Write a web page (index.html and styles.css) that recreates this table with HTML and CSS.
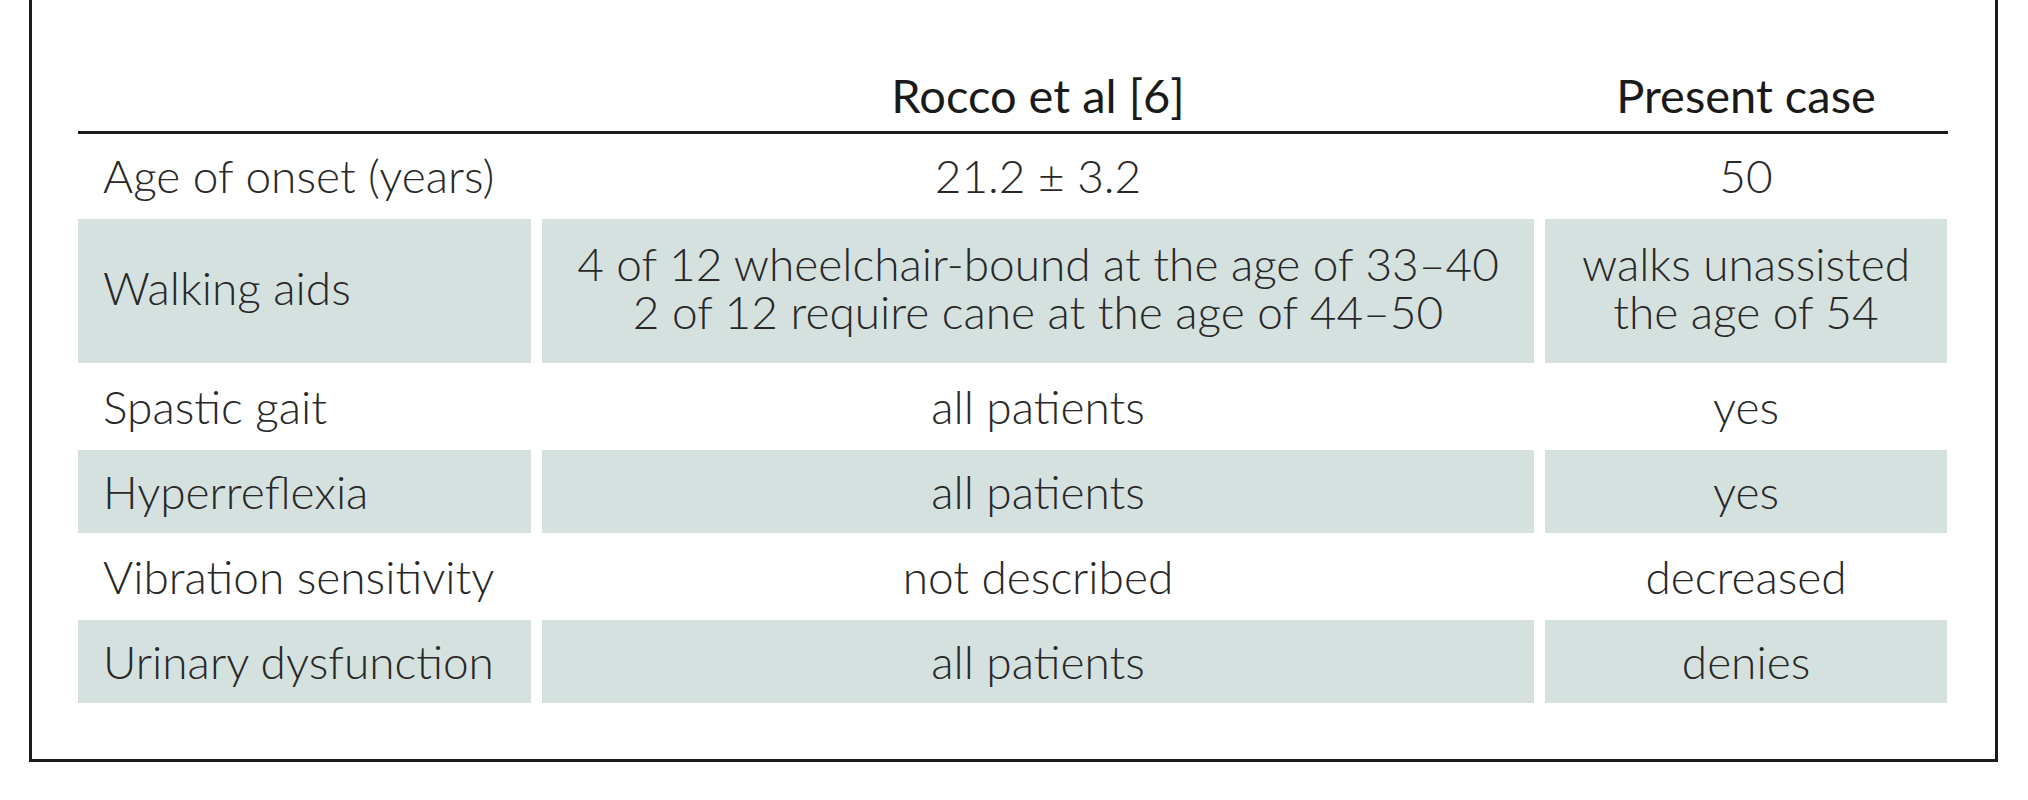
FILE: index.html
```html
<!DOCTYPE html>
<html lang="en">
<head>
<meta charset="utf-8">
<title>Comparison table</title>
<link rel="stylesheet" href="styles.css">
</head>
<body>
<div class="frame">
  <div class="table">
    <div class="row head">
      <div class="cell"></div>
      <div class="cell c">Rocco et al [6]</div>
      <div class="cell c">Present case</div>
    </div>
    <div class="body">
      <div class="row">
        <div class="cell l">Age of onset (years)</div>
        <div class="cell c">21.2 ± 3.2</div>
        <div class="cell c">50</div>
      </div>
      <div class="row shaded tall">
        <div class="cell l">Walking aids</div>
        <div class="cell c"><span class="ln">4 of 12 wheelchair-bound at the age of 33–40</span><span class="ln">2 of 12 require cane at the age of 44–50</span></div>
        <div class="cell c"><span class="ln">walks unassisted</span><span class="ln">the age of 54</span></div>
      </div>
      <div class="row">
        <div class="cell l">Spastic gait</div>
        <div class="cell c">all patients</div>
        <div class="cell c">yes</div>
      </div>
      <div class="row shaded">
        <div class="cell l">Hyperreflexia</div>
        <div class="cell c">all patients</div>
        <div class="cell c">yes</div>
      </div>
      <div class="row">
        <div class="cell l">Vibration sensitivity</div>
        <div class="cell c">not described</div>
        <div class="cell c">decreased</div>
      </div>
      <div class="row shaded">
        <div class="cell l">Urinary dysfunction</div>
        <div class="cell c">all patients</div>
        <div class="cell c">denies</div>
      </div>
    </div>
  </div>
</div>
</body>
</html>
```
FILE: styles.css
```css
html, body {
  margin: 0;
  padding: 0;
  background: #ffffff;
}

body {
  font-family: Lato, "Open Sans", "Liberation Sans", sans-serif;
  color: #282828;
  width: 2028px;
  height: 800px;
  overflow: hidden;
}

.frame {
  box-sizing: border-box;
  margin-left: 29px;
  width: 1969px;
  height: 762px;
  border: 3px solid #1b1b1b;
  border-top: none;
  padding: 0 47px 0 46px;
}

.table {
  display: flex;
  flex-direction: column;
}

.row {
  display: grid;
  grid-template-columns: 453px 992px 402px;
  column-gap: 11px;
}

.head {
  height: 134px;
  box-sizing: border-box;
  border-bottom: 3px solid #1b1b1b;
  align-items: end;
  padding-bottom: 12px;
}

.head .cell {
  height: auto;
  font-size: 47px;
  font-weight: 400;
  color: #1a1a1a;
}

.body {
  display: flex;
  flex-direction: column;
  row-gap: 2px;
}

.cell {
  font-size: 46px;
  line-height: 48px;
  font-weight: 300;
  height: 83px;
  display: flex;
  align-items: center;
}

.row.tall .cell {
  height: 144px;
  padding-bottom: 6px;
  box-sizing: border-box;
}

.row.tall .cell.c {
  flex-direction: column;
  justify-content: center;
  align-items: center;
}

.ln {
  display: block;
  line-height: 48px;
}

.cell.l {
  padding-left: 25px;
}

.cell.c {
  justify-content: center;
  text-align: center;
}

.shaded .cell {
  background: #d4e1df;
}
```
